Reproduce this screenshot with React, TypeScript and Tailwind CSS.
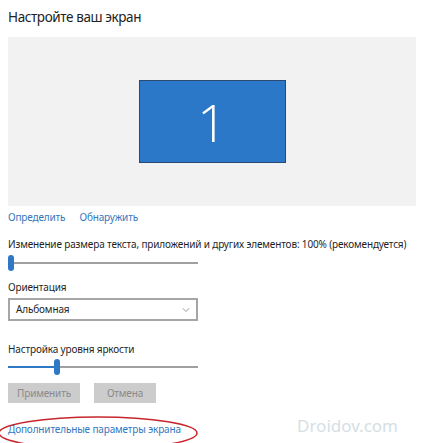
import { ChevronDown } from "lucide-react";

function Slider({ value }: { value: number }) {
  return (
    <div className="relative h-4 w-[190px]">
      <div className="absolute left-0 right-0 top-[7px] h-[2px] bg-[#a0a0a0]" />
      <div className="absolute left-0 top-[7px] h-[2px] bg-[#2f78c6]" style={{ width: value }} />
      <div
        className="absolute top-0 h-4 w-[6px] rounded-full bg-[#2f78c6]"
        style={{ left: value }}
      />
    </div>
  );
}

export default function App() {
  return (
    <div className="relative h-[443px] w-[424px] overflow-hidden bg-white text-[#1f1f1f] tracking-[-0.15px]" style={{ fontFamily: '"Noto Sans", "Open Sans", sans-serif' }}>
      <div className="px-2">
        <h1 className="pt-[5px] text-[13.5px] leading-[24px] font-normal tracking-[-0.4px] text-[#222]">Настройте ваш экран</h1>

        <div className="mt-[8px] flex h-[169px] items-center justify-center bg-[#f2f2f2]">
          <div className="flex h-[83px] w-[147px] items-center justify-center border border-[#2a4a74] bg-[#2b78c9]">
            <span className="text-[52px] font-light leading-none text-white" style={{ fontFamily: '"Open Sans", sans-serif' }}>1</span>
          </div>
        </div>

        <div className="mt-[3px] flex gap-[14px] text-[10px] leading-[16px] text-[#3577c0]">
          <span>Определить</span>
          <span>Обнаружить</span>
        </div>

        <p className="mt-[11px] whitespace-nowrap text-[10px] leading-[16px]">
          Изменение размера текста, приложений и других элементов: 100% (рекомендуется)
        </p>
        <div className="mt-[3px]">
          <Slider value={0} />
        </div>

        <p className="mt-[8px] text-[10px] leading-[16px]">Ориентация</p>
        <div className="mt-[3px] flex h-[23px] w-[190px] items-center justify-between border-2 border-[#a6a6a6] pl-[6px] pr-[4px] text-[10px]">
          <span>Альбомная</span>
          <ChevronDown className="h-3 w-3 text-[#777]" strokeWidth={1.5} />
        </div>

        <p className="mt-[20px] text-[10px] leading-[16px]">Настройка уровня яркости</p>
        <div className="mt-[2px]">
          <Slider value={46} />
        </div>

        <div className="mt-[8px] flex gap-[14px] text-[10px]">
          <button className="h-[20px] w-[72px] bg-[#cccccc] text-[#8a8a8a]">Применить</button>
          <button className="h-[20px] w-[62px] bg-[#cccccc] text-[#8a8a8a]">Отмена</button>
        </div>

        <p className="mt-[18px] text-[10px] leading-[16px] text-[#3577c0]">Дополнительные параметры экрана</p>
      </div>

      {/* red annotation ellipse */}
      <svg className="absolute left-0 top-[410px]" width="210" height="40" viewBox="0 0 210 40">
        <ellipse cx="98" cy="23" rx="99" ry="16" fill="none" stroke="#c8262c" strokeWidth="1.5" />
      </svg>

      <span className="absolute left-[297px] top-[413px] text-[17px] tracking-normal text-[#d6dee4]">Droidov.com</span>
    </div>
  );
}
